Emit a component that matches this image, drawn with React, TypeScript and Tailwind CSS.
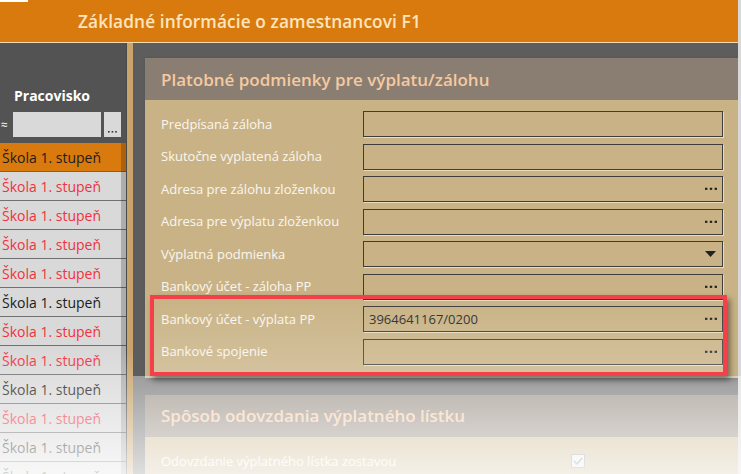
import React from "react";

const Dots = () => (
  <svg width="12" height="3" viewBox="0 0 12 3" className="absolute right-[5px] top-1/2 -translate-y-1/2">
    <rect x="0" y="0" width="2.4" height="2.4" fill="#222" />
    <rect x="4.8" y="0" width="2.4" height="2.4" fill="#222" />
    <rect x="9.6" y="0" width="2.4" height="2.4" fill="#222" />
  </svg>
);

const Caret = () => (
  <svg width="11" height="6" viewBox="0 0 11 6" className="absolute right-[6px] top-1/2 -translate-y-1/2">
    <path d="M0 0 L11 0 L5.5 6 Z" fill="#222" />
  </svg>
);

type Row = { label: string; value?: string; kind?: "dots" | "caret" };

const rows: Row[] = [
  { label: "Predpísaná záloha" },
  { label: "Skutočne vyplatená záloha" },
  { label: "Adresa pre zálohu zloženkou", kind: "dots" },
  { label: "Adresa pre výplatu zloženkou", kind: "dots" },
  { label: "Výplatná podmienka", kind: "caret" },
  { label: "Bankový účet - záloha PP", kind: "dots" },
  { label: "Bankový účet - výplata PP", value: "3964641167/0200", kind: "dots" },
  { label: "Bankové spojenie", kind: "dots" },
];

const listRows: { color: "red" | "black"; active?: boolean }[] = [
  { color: "black", active: true },
  { color: "red" },
  { color: "red" },
  { color: "red" },
  { color: "red" },
  { color: "black" },
  { color: "red" },
  { color: "red" },
  { color: "black" },
  { color: "red" },
  { color: "black" },
  { color: "black" },
];

export default function App() {
  return (
    <div className="relative w-[741px] h-[474px] overflow-hidden flex bg-[#5d5d5d] font-['Open_Sans',sans-serif]">
      <div className="w-[738px] flex flex-col">
        <div className="h-[43px] shrink-0 bg-[#d97a0e] border-b border-[#f3dcb4] flex items-center pl-[78px] pt-[1px]">
          <span className="text-[17.3px] font-semibold text-[#fde5bd] tracking-[0.1px]">
            Základné informácie o zamestnancovi F1
          </span>
        </div>
        <div className="flex-1 flex">
          <div className="w-[127px] shrink-0 bg-[#535353] flex flex-col border-r border-[#4a4a4a]">
            <div className="h-[100px] shrink-0 flex flex-col pt-[44px]">
              <div className="h-[18px] pl-[14px] text-[14px] leading-[18px] font-bold text-white">Pracovisko</div>
              <div className="mt-[7px] h-[25px] flex items-center">
                <span className="w-[13px] text-[12px] text-white leading-none pl-[1px]">≈</span>
                <div className="w-[88px] h-[25px] bg-[#d9d9d9]" />
                <div className="ml-[3px] w-[17px] h-[25px] bg-[#d9d9d9] flex items-end justify-center pb-[4px]">
                  <svg width="9" height="2" viewBox="0 0 9 2">
                    <rect x="0" y="0" width="1.6" height="1.6" fill="#333" />
                    <rect x="3.6" y="0" width="1.6" height="1.6" fill="#333" />
                    <rect x="7.2" y="0" width="1.6" height="1.6" fill="#333" />
                  </svg>
                </div>
              </div>
            </div>
            <div className="relative flex-1 flex flex-col">
              {listRows.map((r, i) => (
                <div
                  key={i}
                  className={`h-[29px] shrink-0 flex items-center pl-[2px] text-[14px] border-b ${
                    r.active ? "bg-[#d97a0e] border-[#9a5a10]" : "bg-[#d9d9d9] border-[#707070]"
                  } ${r.color === "red" ? "text-[#f0323e]" : "text-[#1c1c1c]"}`}
                >
                  Škola 1. stupeň
                </div>
              ))}
              <div className="absolute right-0 top-0 bottom-0 w-[5px] bg-black/20" />
            </div>
          </div>
          <div className="w-[6px] shrink-0 bg-[#c9a46c]" />
          <div className="flex-1 pl-[12px] pt-[15px] flex flex-col gap-[17px]">
            <div className="flex flex-col shadow-[2px_2px_4px_rgba(0,0,0,0.35)]">
              <div className="h-[42px] bg-[#8a7e72] flex items-center pl-[16px] pt-[1px]">
                <span className="text-[17px] font-semibold text-[#f6c9a0]">Platobné podmienky pre výplatu/zálohu</span>
              </div>
              <div className="bg-[#c9b386] pt-[8px] pb-[10px] pl-[16px] flex flex-col">
                {rows.map((r, i) => (
                  <div key={i} className="h-[32.5px] flex items-center">
                    <div className="w-[202px] text-[13px] text-[#faf6ef] whitespace-nowrap">{r.label}</div>
                    <div className="relative w-[360px] h-[26px] border border-[#3d3d3d] shadow-[1px_1px_0_#e8dcc2] flex items-center pl-[5px] text-[13px] text-[#2c2c2c]">
                      {r.value}
                      {r.kind === "dots" && <Dots />}
                      {r.kind === "caret" && <Caret />}
                    </div>
                  </div>
                ))}
              </div>
            </div>
            <div className="flex flex-col">
              <div className="h-[42px] bg-[#8a7e72] flex items-center pl-[16px]">
                <span className="text-[17px] font-semibold text-[#f6c9a0]">Spôsob odovzdania výplatného lístku</span>
              </div>
              <div className="bg-[#c9b386] pt-[8px] pb-[10px] pl-[16px] flex flex-col">
                <div className="h-[32.5px] flex items-center">
                  <div className="w-[202px] text-[13px] text-[#faf6ef] whitespace-nowrap">Odovzdanie výplatného lístka zostavou</div>
                  <div className="ml-[208px] w-[14px] h-[14px] border border-[#8a8a8a] bg-[#e8e8e8] flex items-center justify-center">
                    <svg width="10" height="8" viewBox="0 0 10 8">
                      <path d="M1 4 L4 7 L9 1" stroke="#777" strokeWidth="1.3" fill="none" />
                    </svg>
                  </div>
                </div>
              </div>
            </div>
          </div>
        </div>
      </div>
      <div className="w-[3px] shrink-0 bg-[#d8d8d8]" />

      <div className="absolute left-0 top-0 w-[28px] h-[2px] bg-white" />

      <div className="pointer-events-none absolute left-0 w-[133px] top-[350px] bottom-0 bg-linear-to-b from-white/0 to-white/80" />
      <div className="pointer-events-none absolute left-[133px] right-0 top-[376px] bottom-0 bg-linear-to-b from-white/40 to-white/80" />

      <div className="pointer-events-none absolute left-[150px] top-[295px] w-[577px] h-[81px] border-4 border-[#f4404a] shadow-[3px_4px_6px_rgba(0,0,0,0.45)] bg-linear-to-b from-white/0 to-white/20" />
    </div>
  );
}
